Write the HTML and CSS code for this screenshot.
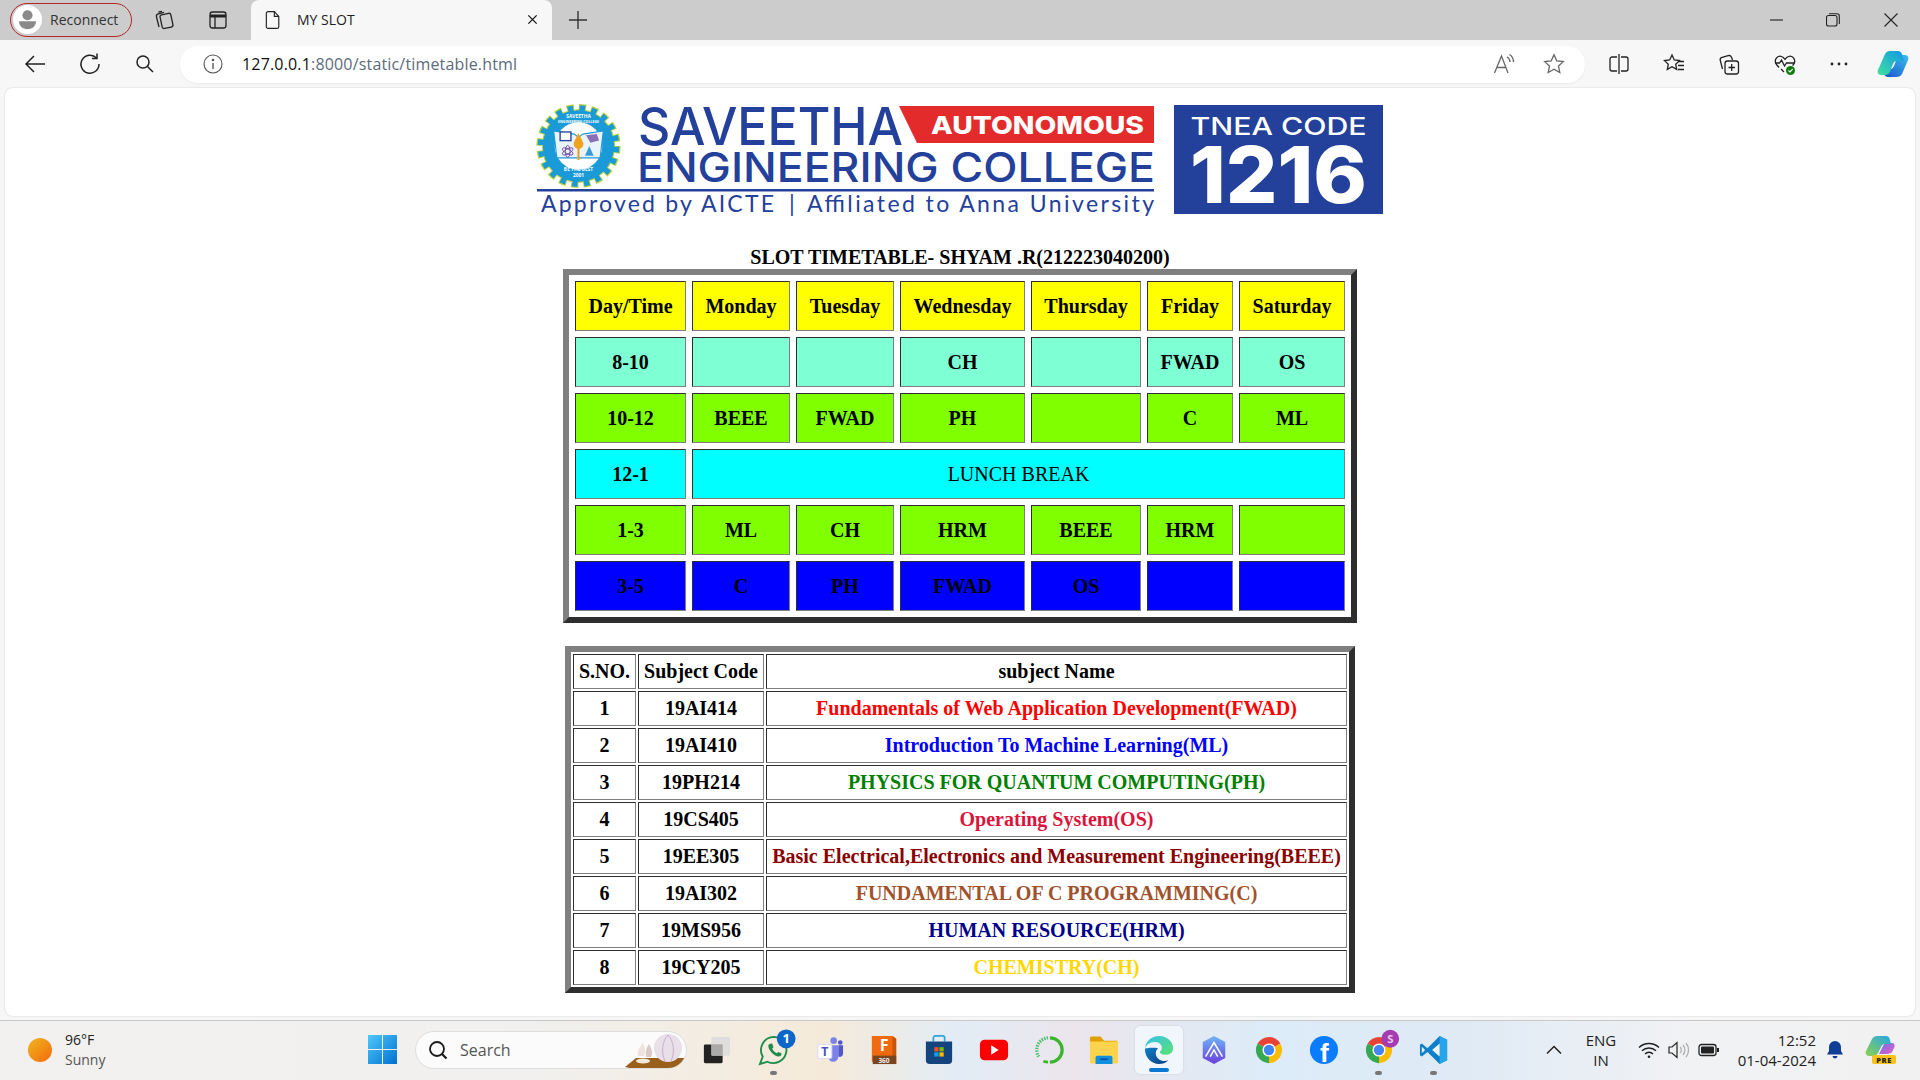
FILE: index.html
```html
<!DOCTYPE html>
<html lang="en">
<head>
<meta charset="utf-8">
<title>MY SLOT</title>
<link rel="stylesheet" href="styles.css">
</head>
<body>
<div class="tabstrip">
  <div class="profile">
    <svg class="avatar" viewBox="0 0 24 24"><circle cx="12" cy="12" r="12" fill="#fff"/><circle cx="12" cy="8.5" r="4.2" fill="#8a8a8a"/><path d="M5 13.5h14c0 4-3 6.5-7 6.5s-7-2.500-7-6.500z" fill="#8a8a8a"/></svg>
    <span>Reconnect</span>
  </div>
  <svg class="strip-ic first" viewBox="0 0 22 22" fill="none" stroke="#222" stroke-width="1.300"><rect x="8" y="5" width="11" height="14" rx="2" transform="rotate(-12 13 12)"/><path d="M6 18 3.500 8c-.4-1.500.4-2.800 1.800-3.200L11 3.400"/><path d="M9 2.500 5.500 3"/></svg>
  <svg class="strip-ic second" viewBox="0 0 22 22" fill="none" stroke="#222" stroke-width="1.300"><rect x="3" y="3" width="16" height="16" rx="2.500"/><path d="M3 7h16" stroke-width="3"/><path d="M8 7v12"/></svg>
  <div class="tab">
    <svg class="doc" viewBox="0 0 18 22" fill="none" stroke="#222" stroke-width="1.300"><path d="M3.500 1.500h7l5 5.500v11.500a2 2 0 0 1-2 2h-10a2 2 0 0 1-2-2V3.500a2 2 0 0 1 2-2z"/><path d="M10.500 1.500V7h5"/></svg>
    <span class="tab-title">MY SLOT</span>
    <svg class="tab-x" viewBox="0 0 12 12" fill="none" stroke="#111" stroke-width="1.400"><path d="M1.500 1.500l9 9M10.500 1.500l-9 9"/></svg>
  </div>
  <svg class="plus" viewBox="0 0 18 18" fill="none" stroke="#333" stroke-width="1.400"><path d="M9 0v18M0 9h18"/></svg>
  <div class="winctl">
    <svg viewBox="0 0 14 14" fill="none" stroke="#222" stroke-width="1.100"><path d="M0 7h13"/></svg>
    <svg viewBox="0 0 14 14" fill="none" stroke="#222" stroke-width="1.100"><rect x=".5" y="2.500" width="10.500" height="10.500" rx="2"/><path d="M3 .7h8a2.300 2.300 0 0 1 2.300 2.300v8"/></svg>
    <svg viewBox="0 0 14 14" fill="none" stroke="#222" stroke-width="1.100"><path d="M.5.500l13 13M13.500.500l-13 13"/></svg>
  </div>
</div>

<div class="toolbar">
  <svg class="nav back" viewBox="0 0 22 22" fill="none" stroke="#222" stroke-width="1.500"><path d="M21 11H2M10 3l-8 8 8 8"/></svg>
  <svg class="nav reload" viewBox="0 0 22 22" fill="none" stroke="#222" stroke-width="1.500"><path d="M17.500 5A9 9 0 1 0 20 11"/><path d="M18 .5V5.500h-5"/></svg>
  <svg class="nav find" viewBox="0 0 20 20" fill="none" stroke="#222" stroke-width="1.500"><circle cx="8" cy="8" r="6"/><path d="M12.500 12.500 18 18"/></svg>
  <div class="address">
    <svg class="info" viewBox="0 0 20 20" fill="none" stroke="#555" stroke-width="1.100"><circle cx="10" cy="10" r="9"/><path d="M10 9v6" stroke-width="1.400"/><circle cx="10" cy="6" r=".8" fill="#555"/></svg>
    <span class="url"><b>127.0.0.1</b>:8000/static/timetable.html</span>
    <svg class="read" viewBox="0 0 24 22" fill="none" stroke="#666" stroke-width="1.300"><path d="M1.500 20 8.500 3 15 20M4 14.500h9"/><path d="M14 4a6 6 0 0 1 3 5M16.500 1.500a9 9 0 0 1 4 7.500"/></svg>
    <svg class="star" viewBox="0 0 22 22" fill="none" stroke="#666" stroke-width="1.300"><path d="M11 1.800l2.800 6 6.500.8-4.800 4.500 1.300 6.500-5.800-3.300-5.800 3.300 1.300-6.500L1.700 8.600l6.500-.8z"/></svg>
  </div>
  <svg class="tool split" viewBox="0 0 22 22" fill="none" stroke="#222" stroke-width="1.300"><path d="M9 4H4a2 2 0 0 0-2 2v10a2 2 0 0 0 2 2h5M13 4h5a2 2 0 0 1 2 2v10a2 2 0 0 1-2 2h-5M11 1v20"/></svg>
  <svg class="tool favs" viewBox="0 0 22 22" fill="none" stroke="#222" stroke-width="1.300"><path d="M9 2l2.300 5 5.200.6-3.800 3.600 1 5.200L9 13.800l-4.700 2.600 1-5.200L1.500 7.600 6.700 7z"/><path d="M15 8.500h6M15 12.500h6M15 16.500h6"/></svg>
  <svg class="tool coll" viewBox="0 0 22 22" fill="none" stroke="#222" stroke-width="1.300"><rect x="7" y="8" width="13.500" height="13" rx="2.500"/><path d="M13.700 11v7M10.500 14.500h6.500"/><path d="M4.500 16 2.300 7.500c-.4-1.400.4-2.800 1.800-3.200l6-1.600c1.400-.4 2.800.2 3.400 1.500L14.500 7"/></svg>
  <svg class="tool health" viewBox="0 0 24 24" fill="none" stroke="#222" stroke-width="1.300"><path d="M6 15.500 3.500 12.500c-3-4 .5-9.500 5-8 1.500.5 2.500 1.500 3.500 2.800 1-1.300 2-2.300 3.500-2.800 4.500-1.500 8 4 5 8l-1 1"/><path d="M2 11h4.500l2-3 3 6 2-3h8"/><path d="M8 17l3 3"/><circle cx="17.500" cy="18.500" r="4.500" fill="#107c10" stroke="none"/><path d="M15.500 18.500l1.500 1.500 2.700-2.800" stroke="#fff" stroke-width="1.100"/></svg>
  <svg class="tool more" viewBox="0 0 20 20" fill="#222"><circle cx="3" cy="10" r="1.400"/><circle cx="10" cy="10" r="1.400"/><circle cx="17" cy="10" r="1.400"/></svg>
  <svg class="copilot" viewBox="0 0 32 28"><defs><linearGradient id="cpa" x1="0" y1="1" x2="1" y2="0"><stop offset="0" stop-color="#3fe0a0"/><stop offset="1" stop-color="#1296e8"/></linearGradient><linearGradient id="cpb" x1="0" y1="1" x2="1" y2="0"><stop offset="0" stop-color="#1a50c8"/><stop offset="1" stop-color="#3cc0f0"/></linearGradient></defs><path d="M19 27h-8c-2 0-3-1-4-3l-1-5h8c1 0 2-1 3-3l3-8c1-2 3-3 5-3h3c3 0 4 3 3 5l-6 14c-1 2-3 3-6 3z" fill="url(#cpb)"/><path d="M13 1h8c2 0 3 1 4 3l2 7h-8c-1 0-2 1-3 3l-3 8c-1 2-3 3-5 3H4c-3 0-4-3-3-5l7-16c1-2 3-3 5-3z" fill="url(#cpa)"/></svg>
</div>

<main class="page">
  <svg class="logo" viewBox="537 105 847 110" role="img" aria-label="Saveetha Engineering College">
    <g transform="translate(578.500 146) scale(1.080) translate(-576 -147)">
      <circle cx="576" cy="147" r="35" fill="none" stroke="#b9d23a" stroke-width="8" stroke-dasharray="6.500 4.500"/>
      <circle cx="576" cy="147" r="33.500" fill="#1b9ad8" stroke="#b9d23a" stroke-width="1"/>
      <circle cx="576" cy="147" r="35" fill="none" stroke="#1b9ad8" stroke-width="5.500" stroke-dasharray="5 6" stroke-dashoffset="-.75"/>
      <circle cx="576" cy="147" r="22" fill="#fff"/>
      <path d="M553 133l19 3 4 3 4-3 19-3-3 25h-40z" fill="#e9f3fa" stroke="#1b9ad8" stroke-width="1"/>
      <rect x="559" y="134" width="10" height="8" fill="#fff" stroke="#2c4aa0" stroke-width="1.300"/>
      <path d="M583 137l10-1 2 6-8 2z" fill="#8a6fb5"/>
      <path d="M576 135l4 8a4.500 4.500 0 1 1-8 0z" fill="#f0a21e"/>
      <rect x="575" y="148" width="2" height="12" fill="#f0a21e"/>
      <g fill="none" stroke="#6a3fa0" stroke-width=".8"><ellipse cx="566" cy="152" rx="5.500" ry="2.200" transform="rotate(30 566 152)"/><ellipse cx="566" cy="152" rx="5.500" ry="2.200" transform="rotate(-30 566 152)"/><ellipse cx="566" cy="152" rx="2.200" ry="5.500"/></g>
      <path d="M586 147l4 9h-8z" fill="#3a9ad8"/>
      <text class="emb" x="576" y="121">SAVEETHA</text>
      <text class="emb sm" x="576" y="126">ENGINEERING COLLEGE</text>
      <text class="emb" x="576" y="170">BE THE BEST</text>
      <text class="emb" x="576" y="176">2001</text>
    </g>
    <text class="lg save" x="638" y="145" textLength="265" lengthAdjust="spacingAndGlyphs">SAVEETHA</text>
    <path d="M899 106h255v37H917z" fill="#e32b2b"/>
    <text class="lg auto" x="931" y="134" textLength="213" lengthAdjust="spacingAndGlyphs">AUTONOMOUS</text>
    <text class="lg eng" x="637" y="182" textLength="518" lengthAdjust="spacingAndGlyphs">ENGINEERING COLLEGE</text>
    <rect x="537" y="189" width="617" height="2.500" fill="#23409a"/>
    <text class="lg appr" x="541" y="212" textLength="233" lengthAdjust="spacing">Approved by AICTE</text>
    <text class="lg appr" x="789" y="212">|</text>
    <text class="lg appr" x="807" y="212" textLength="347" lengthAdjust="spacing">Affiliated to Anna University</text>
    <rect x="1174" y="105" width="209" height="109" fill="#23409a"/>
    <text class="lg tnea" x="1190.500" y="135" textLength="176" lengthAdjust="spacingAndGlyphs">TNEA CODE</text>
    <text class="lg code" x="1190" y="203" textLength="177" lengthAdjust="spacingAndGlyphs">1216</text>
  </svg>

  <h1 class="heading">SLOT TIMETABLE- SHYAM .R(212223040200)</h1>

  <table class="slots">
    <colgroup><col class="c1"><col class="c2"><col class="c2"><col class="c3"><col class="c4"><col class="c5"><col class="c6"></colgroup>
    <tr class="yellow"><td>Day/Time</td><td>Monday</td><td>Tuesday</td><td>Wednesday</td><td>Thursday</td><td>Friday</td><td>Saturday</td></tr>
    <tr class="aqua"><td>8-10</td><td></td><td></td><td>CH</td><td></td><td>FWAD</td><td>OS</td></tr>
    <tr class="lime"><td>10-12</td><td>BEEE</td><td>FWAD</td><td>PH</td><td></td><td>C</td><td>ML</td></tr>
    <tr class="cyan"><td>12-1</td><td class="lunch" colspan="6">LUNCH BREAK</td></tr>
    <tr class="lime"><td>1-3</td><td>ML</td><td>CH</td><td>HRM</td><td>BEEE</td><td>HRM</td><td></td></tr>
    <tr class="blue"><td>3-5</td><td>C</td><td>PH</td><td>FWAD</td><td>OS</td><td></td><td></td></tr>
  </table>

  <table class="subjects">
    <colgroup><col class="s1"><col class="s2"><col class="s3"></colgroup>
    <tr><td>S.NO.</td><td>Subject Code</td><td>subject Name</td></tr>
    <tr><td>1</td><td>19AI414</td><td class="t-red">Fundamentals of Web Application Development(FWAD)</td></tr>
    <tr><td>2</td><td>19AI410</td><td class="t-blue">Introduction To Machine Learning(ML)</td></tr>
    <tr><td>3</td><td>19PH214</td><td class="t-green">PHYSICS FOR QUANTUM COMPUTING(PH)</td></tr>
    <tr><td>4</td><td>19CS405</td><td class="t-crimson">Operating System(OS)</td></tr>
    <tr><td>5</td><td>19EE305</td><td class="t-darkred">Basic Electrical,Electronics and Measurement Engineering(BEEE)</td></tr>
    <tr><td>6</td><td>19AI302</td><td class="t-sienna">FUNDAMENTAL OF C PROGRAMMING(C)</td></tr>
    <tr><td>7</td><td>19MS956</td><td class="t-navy">HUMAN RESOURCE(HRM)</td></tr>
    <tr><td>8</td><td>19CY205</td><td class="t-gold">CHEMISTRY(CH)</td></tr>
  </table>
</main>

<footer class="taskbar">
  <div class="weather">
    <span class="orb"></span>
    <div class="wtext"><div>96°F</div><div class="sunny">Sunny</div></div>
  </div>
  <div class="slot">
    <svg class="start" viewBox="0 0 29 29"><defs><linearGradient id="win" x1="0" y1="0" x2="1" y2="1"><stop offset="0" stop-color="#4fc8fb"/><stop offset="1" stop-color="#0070d0"/></linearGradient></defs><path d="M0 0h14v14H0zM15 0h14v14H15zM0 15h14v14H0zM15 15h14v14H15z" fill="url(#win)"/></svg>
  </div>
  <div class="search">
    <svg class="search-ic" viewBox="0 0 20 20" fill="none" stroke="#1a1a1a" stroke-width="1.800"><circle cx="9" cy="9" r="7"/><path d="M14 14l4.500 4.500" stroke-width="2.200"/></svg>
    <span class="search-t">Search</span>
    <svg class="garlic" viewBox="0 0 62 38"><path d="M1 36 12 27h48l2 6-8 5H10z" fill="#9a5f1c"/><ellipse cx="44" cy="17" rx="14" ry="14" fill="#e8dfe8"/><path d="M44 4c-6 6-7 18-3 26M44 4c6 6 7 18 3 26" stroke="#c3b0c8" fill="none"/><path d="M14 25c-1-6 2-9 5-13 2 5 3 8 1 13z" fill="#eee3dd"/><path d="M22 26c-1-6 1-10 3-13 3 5 4 9 2 13z" fill="#d9cac8"/><ellipse cx="19" cy="30" rx="7" ry="2.500" fill="#f2e9da"/></svg>
  </div>
  <div class="slot wide">
    <svg class="ti" viewBox="0 0 32 32"><rect x="2" y="10" width="20" height="20" rx="1.500" fill="#222"/><rect x="10" y="2" width="20" height="20" rx="1.500" fill="#dcdcdc" fill-opacity=".85"/><rect x="10" y="10" width="12" height="12" fill="#aaa"/></svg>
  </div>
  <div class="slot run">
    <svg class="ti" viewBox="0 0 32 32"><path d="M16 2a14 14 0 0 0-12 21L1 31l8-2.500A14 14 0 1 0 16 2z" fill="none" stroke="#1f8c4d" stroke-width="2"/><path d="M10 11c-1 4 6 12 11 12 2 0 3-1 3-3.500l-3.500-1.500-1.500 1.500c-2.500-1-4-3-5-5l1.500-1.500L14 9c-2 0-3.500.5-4 2z" fill="#1f8c4d"/><circle cx="29" cy="4" r="10" fill="#0a66c8"/><text class="badge" x="29" y="9">1</text></svg>
  </div>
  <div class="slot">
    <svg class="ti" viewBox="0 0 32 32"><circle cx="21" cy="6" r="3.500" fill="#7b83eb"/><circle cx="28" cy="8" r="2.500" fill="#5059c9"/><path d="M15 11h11v12a5.500 5.500 0 0 1-11 0z" fill="#7b83eb"/><path d="M26 11h5v9a3.500 3.500 0 0 1-5 3z" fill="#5059c9"/><rect x="4" y="10" width="15" height="15" rx="1.500" fill="#fff" stroke="#d5d8f5"/><text class="teams" x="11.500" y="22">T</text></svg>
  </div>
  <div class="slot">
    <svg class="ti" viewBox="0 0 32 32"><path d="M3 1h22l4 3v27H7l-4-3z" fill="#f26a0f"/><path d="M25 1l4 3v27h-4z" fill="#c85408"/><rect x="4" y="22" width="25" height="9" fill="#7a4521"/><text class="f360" x="16" y="17">F</text><text class="f360s" x="16" y="29.500">360</text></svg>
  </div>
  <div class="slot">
    <svg class="ti" viewBox="0 0 32 32"><path d="M10 7V3a2 2 0 0 1 2-2h8a2 2 0 0 1 2 2v4" fill="none" stroke="#2aa5e0" stroke-width="1.800"/><path d="M2 7h28v20a4 4 0 0 1-4 4H6a4 4 0 0 1-4-4z" fill="#14447e"/><rect x="11" y="13" width="4.500" height="4.500" fill="#f25022"/><rect x="16.500" y="13" width="4.500" height="4.500" fill="#7fba00"/><rect x="11" y="18.500" width="4.500" height="4.500" fill="#00a4ef"/><rect x="16.500" y="18.500" width="4.500" height="4.500" fill="#ffb900"/></svg>
  </div>
  <div class="slot">
    <svg class="ti" viewBox="0 0 32 32"><rect x="1" y="5" width="30" height="22" rx="5" fill="#f00"/><path d="M13 11l8 5-8 5z" fill="#fff"/></svg>
  </div>
  <div class="slot">
    <svg class="ti" viewBox="0 0 32 32" fill="none"><path d="M17 3a13 13 0 0 1 0 26" stroke="#3cb52c" stroke-width="3.500"/><path d="M15 29a13 13 0 0 1-5-1" stroke="#3cb52c" stroke-width="3"/><path d="M15 3a13 13 0 0 0-10 20" stroke="#4bbf6a" stroke-width="3.500" stroke-dasharray="1.600 1.200"/></svg>
  </div>
  <div class="slot">
    <svg class="ti" viewBox="0 0 32 32"><path d="M1 3a1.500 1.500 0 0 1 1.500-1.500h10L16 6h14v6H1z" fill="#e0a100"/><path d="M1 7h30v22a1.500 1.500 0 0 1-1.500 1.500h-27A1.500 1.500 0 0 1 1 29z" fill="#fbd34d"/><path d="M7 31v-7a2 2 0 0 1 2-2h14a2 2 0 0 1 2 2v7z" fill="#0f8fe0"/><rect x="12" y="25" width="8" height="1.800" fill="#0b4f96"/></svg>
  </div>
  <div class="slot active">
    <svg class="ti" viewBox="0 0 32 32"><defs><linearGradient id="edA" x1="0" y1="0" x2="1" y2="1"><stop offset="0" stop-color="#35c1f1"/><stop offset="1" stop-color="#5be36e"/></linearGradient><linearGradient id="edB" x1="0" y1="0" x2="1" y2="1"><stop offset="0" stop-color="#0f7fc8"/><stop offset="1" stop-color="#0a3f82"/></linearGradient></defs><path d="M1 15C1 7 8 1 16 1c9 0 15 6 15 13 0 5-4 7-8 7-3 0-6-1-6-3 0-1 2-1.500 2-4.500 0-3-3-6-7-6C6 7.500 1.500 11 1 15z" fill="url(#edA)"/><path d="M1 15c0 9 7 16 15 16 4 0 7-1 10-4-3 1.500-8 1-11-2-3-3-3.500-8 0-11-6-1-14 0-14 1z" fill="url(#edB)"/></svg>
    <span class="active-bar"></span>
  </div>
  <div class="slot">
    <svg class="ti" viewBox="0 0 32 32"><defs><linearGradient id="prt" x1="0" y1="0" x2="0" y2="1"><stop offset="0" stop-color="#6fb5f5"/><stop offset="1" stop-color="#6b3fe0"/></linearGradient></defs><path d="M16 1l12 6.500v17L16 31 4 24.500v-17z" fill="url(#prt)"/><path d="M7 23 16 8l9 15M12 23l4-7 4 7" fill="none" stroke="#fff" stroke-width="1.600"/></svg>
  </div>
  <div class="slot">
    <svg class="ti" viewBox="0 0 32 32"><use href="#chrome"/></svg>
  </div>
  <div class="slot">
    <svg class="ti" viewBox="0 0 32 32"><circle cx="16" cy="16" r="15" fill="#0a7cff"/><text class="fb" x="16.500" y="29">f</text></svg>
  </div>
  <div class="slot run">
    <svg class="ti" viewBox="0 0 32 32"><use href="#chrome"/><circle cx="28" cy="4" r="9.500" fill="#a43bb0"/><text class="sb" x="28" y="8.500">S</text></svg>
  </div>
  <div class="slot run">
    <svg class="ti" viewBox="0 0 32 32"><path d="M22 1l8 4v22l-8 4-13-13-6 5-2-1.500v-11L3 9l6 5z" fill="#0e7fcb"/><path d="M22 1l8 4v22l-8 4z" fill="#27a5ea"/><path d="M22 9l-8 7 8 7z" fill="#f1f4f8"/><path d="M3 12.500 6.500 16 3 19.500z" fill="#f1f4f8"/></svg>
  </div>
  <div class="tray">
    <svg class="chev" viewBox="0 0 16 10" fill="none" stroke="#222" stroke-width="1.500"><path d="M1 8.500 8 1.500l7 7"/></svg>
    <div class="lang"><div>ENG</div><div>IN</div></div>
    <svg class="tr wifi" viewBox="0 0 22 18" fill="none" stroke="#222" stroke-width="1.400"><path d="M1 6.500a14.500 14.500 0 0 1 20 0M4 9.800a10 10 0 0 1 14 0M7 13a5.500 5.500 0 0 1 8 0"/><circle cx="11" cy="15.800" r="1.300" fill="#222" stroke="none"/></svg>
    <svg class="tr spk" viewBox="0 0 22 18" fill="none" stroke="#222" stroke-width="1.200"><path d="M1 6v6h3l5 4.500V1.500L4 6z"/><path d="M12 6a4 4 0 0 1 0 6M15 4a7.500 7.500 0 0 1 0 10M18 2a11 11 0 0 1 0 14" stroke="#aaa"/></svg>
    <svg class="tr batt" viewBox="0 0 22 14" fill="none" stroke="#222" stroke-width="1.300"><rect x="1" y="1.500" width="17" height="11" rx="2.500"/><rect x="3" y="3.500" width="13" height="7" rx="1" fill="#222" stroke="none"/><path d="M20 5v4" stroke-width="2"/></svg>
    <div class="clock"><div>12:52</div><div>01-04-2024</div></div>
    <svg class="bell" viewBox="0 0 18 20"><path d="M9 1a6 6 0 0 0-6 6v4l-2 3.500h16L15 11V7a6 6 0 0 0-6-6z" fill="#0f3f94"/><path d="M6.500 16a2.500 2.500 0 0 0 5 0z" fill="#0f3f94"/></svg>
    <svg class="pre" viewBox="0 0 34 30"><defs><linearGradient id="pa" x1="0" y1="1" x2="1" y2="0"><stop offset="0" stop-color="#8ed14f"/><stop offset="1" stop-color="#22a7e8"/></linearGradient><linearGradient id="pb" x1="0" y1="0" x2="1" y2="1"><stop offset="0" stop-color="#6a6ef0"/><stop offset="1" stop-color="#ea5fc0"/></linearGradient></defs><path d="M22 19h-6l4-8c1-2 2-3 4-3h5c2 0 3 2 2.500 4L29 17c-1 1.500-3 2-7 2z" fill="url(#pb)"/><path d="M14 1h9c2 0 3 1 3.500 2.500L28 9h-6c-2 0-3 1-4 3l-3 6c-1 2-3 3-5 3H6c-3 0-4-3-3-5l6-12c1-2 3-3 5-3z" fill="url(#pa)"/><rect x="9" y="20" width="24" height="9" rx="2" fill="#f7c21a"/><text class="pretext" x="21" y="27.500">PRE</text></svg>
  </div>
</footer>

<svg class="defs" width="0" height="0"><defs><g id="chrome"><path d="M16 16 3.900 9A14 14 0 0 1 28.100 9z" fill="#ea4335"/><path d="M16 16 28.100 9A14 14 0 0 1 16 30z" fill="#fbbc05"/><path d="M16 16V30A14 14 0 0 1 3.900 9z" fill="#34a853"/><circle cx="16" cy="16" r="7" fill="#fff"/><circle cx="16" cy="16" r="5.500" fill="#4285f4"/></g></defs></svg>
</body>
</html>
```
FILE: styles.css
```css
* { box-sizing: border-box; }
html, body { margin: 0; height: 100%; }
body {
  width: 1920px; height: 1080px; overflow: hidden;
  background: #f7f7f7;
  font-family: "Open Sans", "Noto Sans", sans-serif;
  color: #222;
  display: flex; flex-direction: column;
}

/* tab strip */
.tabstrip { height: 40px; flex: none; background: #ccc; display: flex; align-items: center; padding-left: 10px; }
.profile { width: 122px; height: 34px; border: 1px solid #b3262b; border-radius: 17px; display: flex; align-items: center; gap: 8px; padding: 0 0 1px 2px; font-size: 14px; color: #333; }
.avatar { width: 29px; height: 29px; flex: none; }
.strip-ic { width: 22px; height: 22px; flex: none; }
.strip-ic.first { margin-left: 21px; }
.strip-ic.second { margin-left: 32px; }
.tab { width: 301px; height: 40px; margin-left: 22px; background: #f7f7f7; border-radius: 8px 8px 0 0; display: flex; align-items: center; padding: 0 0 1px 14px; font-size: 14px; flex: none; }
.doc { width: 16px; height: 20px; }
.tab-title { margin-left: 16px; flex: 1; color: #222; }
.tab-x { width: 11px; height: 11px; margin-right: 14px; }
.plus { width: 18px; height: 18px; margin-left: 17px; flex: none; }
.winctl { margin-left: auto; display: flex; align-items: center; gap: 44px; padding-right: 22px; }
.winctl svg { width: 14px; height: 14px; display: block; }
.winctl svg:first-child { margin-right: -2px; }

/* toolbar */
.toolbar { height: 48px; flex: none; background: #f7f7f7; display: flex; align-items: center; }
.nav { width: 22px; height: 22px; flex: none; }
.back { margin-left: 24px; }
.reload { margin-left: 33px; }
.find { width: 20px; height: 20px; margin-left: 34px; }
.address { width: 1405px; height: 37px; margin-left: 25px; flex: none; background: #fff; border-radius: 18px; display: flex; align-items: center; box-shadow: 0 1px 2px rgba(0,0,0,.05); padding-left: 23px; }
.info { width: 20px; height: 20px; flex: none; }
.url { margin-left: 19px; font-size: 16px; color: #5c6b7c; flex: 1; letter-spacing: .17px; }
.url b { font-weight: 400; color: #111; }
.read { width: 24px; height: 22px; flex: none; }
.star { width: 22px; height: 22px; flex: none; margin-left: 26px; margin-right: 20px; }
.tool { width: 22px; height: 22px; flex: none; }
.split { margin-left: 23px; }
.favs { margin-left: 33px; }
.coll { margin-left: 33px; }
.health { width: 24px; height: 24px; margin-left: 33px; }
.more { width: 20px; height: 20px; margin-left: 32px; }
.copilot { width: 32px; height: 28px; margin-left: 28px; flex: none; }

/* page */
.page { flex: none; height: 928px; margin: 0 5px; background: #fff; border-radius: 8px; padding-top: 17px; box-shadow: 0 0 2px rgba(0,0,0,.18); font-family: "Liberation Serif", "Times New Roman", serif; color: #000; overflow: hidden; }
.logo { display: block; width: 847px; height: 110px; margin: 0 auto; overflow: visible; }
.lg { font-family: Inter, "Open Sans", sans-serif; fill: #23409a; }
.save { font-size: 52px; font-weight: 500; }
.eng { font-size: 41px; font-weight: 500; }
.auto { font-size: 25px; font-weight: 800; fill: #fff; }
.appr { font-family: Lato, sans-serif; font-size: 23px; }
.tnea { font-size: 24px; font-weight: 500; fill: #fff; }
.code { font-size: 79px; font-weight: 800; fill: #fff; }
.emb { font-family: "Open Sans", sans-serif; font-size: 4.500px; font-weight: 700; fill: #fff; text-anchor: middle; }
.emb.sm { font-size: 3.300px; }
.heading { margin: 31px 0 0; font-size: 20px; line-height: 23px; font-weight: 700; text-align: center; }

table { border-collapse: separate; margin: 0 auto; table-layout: fixed; font-size: 20px; font-weight: 700; text-align: center; }
table, td { border-style: solid; }
table { border-width: 6px; border-color: #808080 #2e2e2e #2e2e2e #808080; }
td { border-width: 1px; border-color: #2e2e2e #808080 #808080 #2e2e2e; padding: 0; }

.slots { width: 794px; border-spacing: 6px; }
.slots td { height: 50px; }
.c1 { width: 111px; } .c2 { width: 98px; } .c3 { width: 125px; } .c4 { width: 110px; } .c5 { width: 86px; } .c6 { width: 106px; }
.yellow td { background: #ff0; }
.aqua td { background: #7fffd4; }
.lime td { background: #7fff00; }
.cyan td { background: #0ff; }
.blue td { background: #00f; }
.lunch { font-weight: 400; }

.subjects { width: 790px; margin-top: 23px; border-spacing: 2px; }
.subjects td { height: 35px; }
.s1 { width: 63px; } .s2 { width: 126px; } .s3 { width: 581px; }
.t-red { color: #f00; } .t-blue { color: #00f; } .t-green { color: #008000; } .t-crimson { color: #dc143c; }
.t-darkred { color: #8b0000; } .t-sienna { color: #a0522d; } .t-navy { color: #00008b; } .t-gold { color: #ffd700; }

/* taskbar */
.taskbar { margin-top: 4px; height: 60px; flex: none; border-top: 1px solid #c8c8c8; padding-bottom: 2px; display: flex; align-items: center;
  background: linear-gradient(90deg, #f2f1ef 0, #f1f0ee 28%, #f5ead9 43%, #e2ecf6 50%, #ece5ec 56%, #dcecf8 66%, #dfeaf5 76%, #f1f2f4 88%, #f1f1f1 100%); }
.weather { width: 355px; flex: none; display: flex; align-items: center; padding-left: 28px; gap: 13px; font-size: 14px; line-height: 20px; }
.orb { width: 24px; height: 24px; border-radius: 50%; background: linear-gradient(135deg, #efb722, #f46a0a); }
.sunny { color: #555; }
.slot { width: 55px; height: 48px; flex: none; display: flex; align-items: center; justify-content: center; position: relative; }
.slot.wide { width: 59px; }
.start { width: 29px; height: 29px; }
.search { width: 272px; height: 38px; margin-left: 5px; flex: none; background: #fbfbfb; border: 1px solid #dedede; border-radius: 19px; display: flex; align-items: center; padding-left: 12px; font-size: 16px; color: #555; position: relative; overflow: hidden; }
.search-ic { width: 20px; height: 20px; flex: none; }
.search-t { margin-left: 12px; flex: 1; }
.garlic { width: 62px; height: 38px; flex: none; }
.ti { width: 30px; height: 30px; overflow: visible; }
.run::after { content: ""; position: absolute; bottom: -1px; left: 24px; width: 7px; height: 4px; border-radius: 2px; background: #777; }
.active { background: #f1f6fc; border-radius: 5px; box-shadow: 0 0 2px rgba(0,0,0,.15); width: 48px; margin: 0 3.500px; }
.active-bar { position: absolute; bottom: 2px; left: 14px; width: 20px; height: 4px; border-radius: 2px; background: #0a78d4; }
.badge { font-family: "Open Sans", sans-serif; font-weight: 700; font-size: 14px; fill: #fff; text-anchor: middle; }
.sb { font-family: "Open Sans", sans-serif; font-weight: 700; font-size: 12px; fill: #e8c8ec; text-anchor: middle; }
.teams { font-family: "Open Sans", sans-serif; font-weight: 700; font-size: 13px; fill: #4b53bc; text-anchor: middle; }
.f360 { font-family: "Open Sans", sans-serif; font-weight: 700; font-size: 17px; fill: #fff; text-anchor: middle; }
.f360s { font-family: "Open Sans", sans-serif; font-weight: 700; font-size: 7px; fill: #eee; text-anchor: middle; }
.fb { font-family: "Liberation Sans", sans-serif; font-weight: 700; font-size: 28px; fill: #fff; text-anchor: middle; }
.pretext { font-family: "Open Sans", sans-serif; font-weight: 800; font-size: 7.500px; letter-spacing: .6px; fill: #222; text-anchor: middle; }
.defs { position: absolute; }

.tray { margin-left: auto; display: flex; align-items: center; padding-right: 23px; font-size: 15px; line-height: 20px; color: #222; }
.chev { width: 16px; height: 10px; margin: 0 4px; }
.lang { width: 40px; margin-left: 15px; text-align: center; }
.tr { height: 18px; width: 22px; flex: none; }
.wifi { margin-left: 17px; }
.spk { margin-left: 8px; }
.batt { margin-left: 8px; height: 14px; }
.clock { width: 96px; text-align: right; }
.bell { width: 18px; height: 20px; margin-left: 10px; }
.pre { width: 34px; height: 30px; margin-left: 19px; }
```
